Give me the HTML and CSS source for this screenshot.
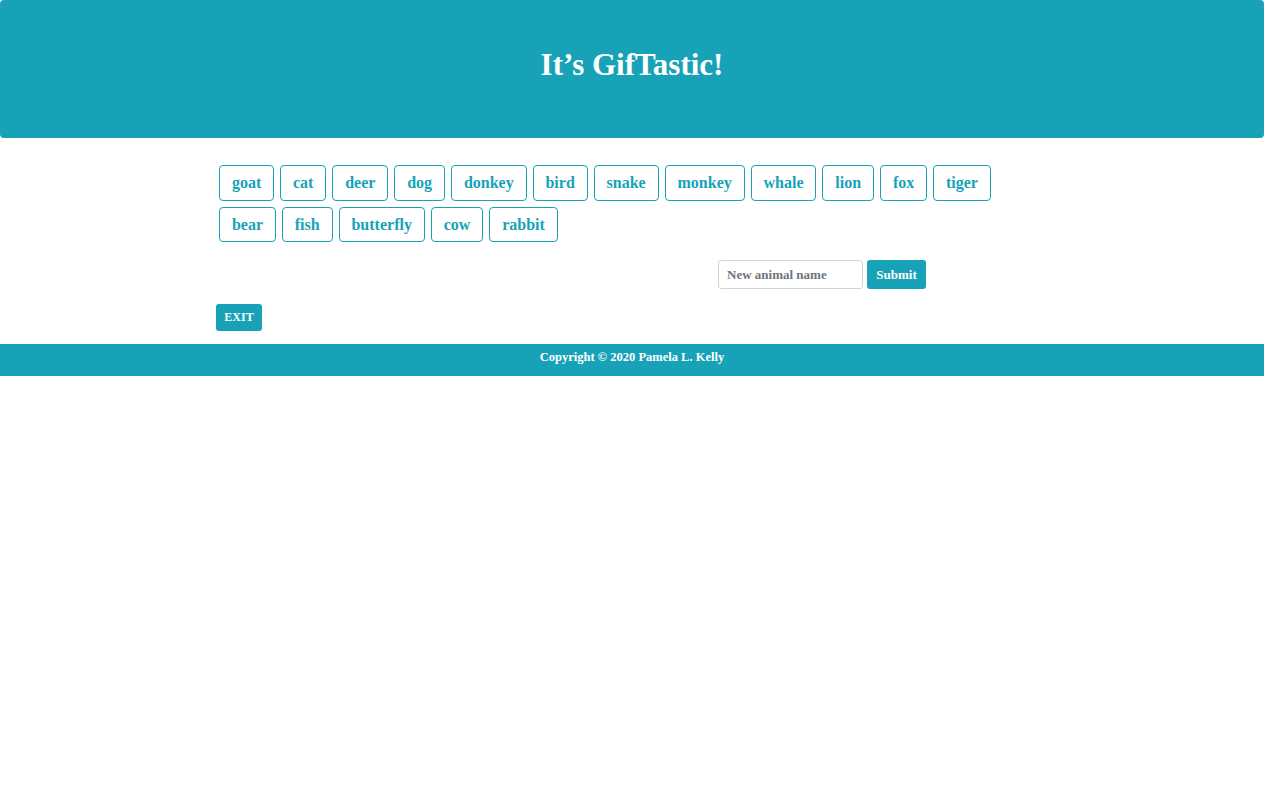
FILE: index.html
```html
<!DOCTYPE html>
<html>
<head>
<meta charset="utf-8">
<title>GifTastic</title>
<link rel="stylesheet" href="styles.css">
</head>
<body>
<header class="hero">
  <h1 class="hero-title">It’s GifTastic!</h1>
</header>
<main class="container">
  <div class="animal-buttons">
    <button class="animal-btn">goat</button>
    <button class="animal-btn">cat</button>
    <button class="animal-btn">deer</button>
    <button class="animal-btn">dog</button>
    <button class="animal-btn">donkey</button>
    <button class="animal-btn">bird</button>
    <button class="animal-btn">snake</button>
    <button class="animal-btn">monkey</button>
    <button class="animal-btn">whale</button>
    <button class="animal-btn">lion</button>
    <button class="animal-btn">fox</button>
    <button class="animal-btn">tiger</button>
    <button class="animal-btn">bear</button>
    <button class="animal-btn">fish</button>
    <button class="animal-btn">butterfly</button>
    <button class="animal-btn">cow</button>
    <button class="animal-btn">rabbit</button>
  </div>
  <form class="add-form">
    <input class="add-input" type="text" placeholder="New animal name">
    <button class="add-submit" type="button">Submit</button>
  </form>
  <button class="exit-btn" type="button">EXIT</button>
</main>
<footer class="footer">Copyright © 2020 Pamela L. Kelly</footer>
</body>
</html>
```
FILE: styles.css
```css
* { box-sizing: border-box; }
body {
  margin: 0;
  font-family: "Liberation Serif", "DejaVu Serif", serif;
  font-weight: 700;
  background: #fff;
}
.hero {
  background: #17a2b8;
  height: 138px;
  border-radius: 4px;
  display: flex;
  justify-content: center;
  padding-top: 45px;
}
.hero-title {
  margin: 0;
  color: #fff;
  font-size: 31px;
  line-height: 40px;
  font-weight: 700;
}
.container {
  width: 832px;
  margin: 0 auto;
  padding-top: 24px;
}
.animal-buttons {
  display: flex;
  flex-wrap: wrap;
}
.animal-btn {
  margin: 3px;
  height: 36px;
  padding: 0 11.9px;
  border: 1px solid #17a2b8;
  border-radius: 4px;
  background: #fff;
  color: #17a2b8;
  font-family: inherit;
  font-weight: 700;
  font-size: 16px;
  line-height: 34px;
}
.animal-buttons .animal-btn:nth-child(n+13) { height: 35px; }
.add-form {
  display: flex;
  gap: 4px;
  margin: 15px 0 0 502px;
}
.add-input {
  width: 145px;
  height: 29px;
  border: 1px solid #ced4da;
  border-radius: 3px;
  padding: 0 8px;
  font-family: inherit;
  font-weight: 700;
  font-size: 13px;
  color: #495057;
}
.add-input::placeholder { color: #6c757d; }
.add-submit {
  height: 29px;
  width: 59px;
  border: none;
  border-radius: 3px;
  background: #17a2b8;
  color: #fff;
  font-family: inherit;
  font-weight: 700;
  font-size: 13px;
}
.exit-btn {
  display: block;
  margin-top: 15px;
  width: 46px;
  height: 27px;
  border: none;
  border-radius: 3px;
  background: #17a2b8;
  color: #fff;
  font-family: inherit;
  font-weight: 700;
  font-size: 12px;
  padding: 0;
}
.footer {
  margin-top: 13px;
  height: 32px;
  background: #17a2b8;
  color: #fff;
  text-align: center;
  font-size: 12.5px;
  line-height: 26px;
}
```
